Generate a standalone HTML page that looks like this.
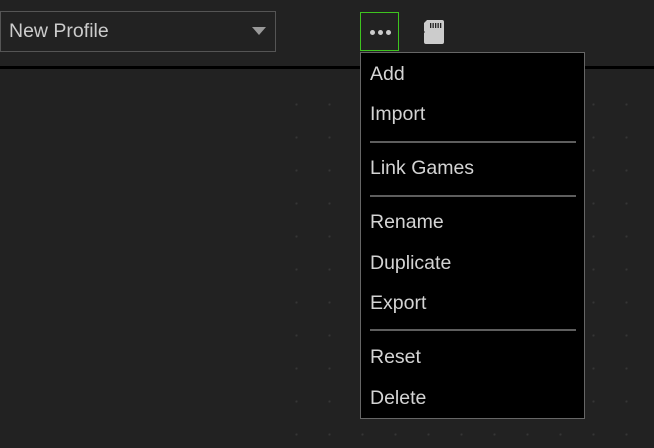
<!DOCTYPE html>
<html><head><style>
*{margin:0;padding:0;box-sizing:border-box}
body{width:654px;height:448px;background:#222;overflow:hidden;position:relative;font-family:"Liberation Sans",sans-serif}
.dots{position:absolute;left:280px;top:88px;width:374px;height:360px;background-image:radial-gradient(#363636 1px,transparent 1.2px);background-size:33px 33px;background-position:0 0}
.dd{position:absolute;left:0;top:11px;width:276px;height:41px;border:1px solid #555;background:#222;color:#ccc;font-size:19.5px;line-height:39px;padding-left:8px}
.tri{position:absolute;left:252px;top:27px;width:0;height:0;border-left:7px solid transparent;border-right:7px solid transparent;border-top:8px solid #999}
.btn{position:absolute;left:360px;top:12px;width:39px;height:39px;border:1px solid #3ec41f}
.btn i{position:absolute;top:17px;width:5px;height:5px;border-radius:50%;background:#ccc}
.line{position:absolute;left:0;top:66px;width:654px;height:3px;background:#000}
.menu{position:absolute;left:360px;top:52px;width:225px;height:367px;background:#000;border:1px solid #666}
.it{position:absolute;left:9px;color:#d4d4d4;font-size:19.5px;line-height:24px}
.sep{position:absolute;left:9px;width:206px;height:2px;background:#5e5e5e}
</style></head><body>
<div class="dots"></div>
<div class="dd">New Profile</div>
<div class="tri"></div>
<div class="btn"><i style="left:9px"></i><i style="left:17px"></i><i style="left:25px"></i></div>
<svg style="position:absolute;left:422px;top:19px" width="24" height="26" viewBox="0 0 24 26"><path d="M5 1H20Q22 1 22 3V23Q22 25 20 25H4Q2 25 2 23V14Q3.5 13 2 12V4Z" fill="#ccc"/><g fill="#222"><rect x="8" y="4" width="1.3" height="5"/><rect x="10.5" y="4" width="1.3" height="5"/><rect x="13" y="4" width="1.3" height="5"/><rect x="15.5" y="4" width="1.3" height="5"/><rect x="18" y="4" width="1.3" height="5"/></g></svg>
<div class="line"></div>
<div class="menu">
<div class="it" style="top:9px">Add</div>
<div class="it" style="top:49px">Import</div>
<div class="sep" style="top:88px"></div>
<div class="it" style="top:103px">Link Games</div>
<div class="sep" style="top:142px"></div>
<div class="it" style="top:157px">Rename</div>
<div class="it" style="top:198px">Duplicate</div>
<div class="it" style="top:238px">Export</div>
<div class="sep" style="top:276px"></div>
<div class="it" style="top:292px">Reset</div>
<div class="it" style="top:333px">Delete</div>
</div>
</body></html>
